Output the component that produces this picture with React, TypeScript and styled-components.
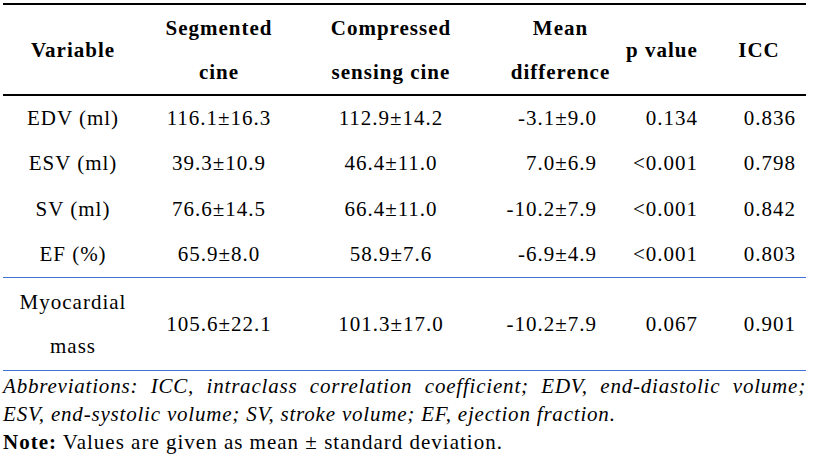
import React from "react";
import styled, { createGlobalStyle } from "styled-components";

const Global = createGlobalStyle`
  html, body { margin: 0; padding: 0; background: #fff; color: #000; }
  body { font-family: "Liberation Serif", "Times New Roman", serif; }
`;

const Page = styled.div`
  padding: 3px 7px 0 3px;
  width: 813px;
  box-sizing: border-box;
  font-family: "Liberation Serif", "Times New Roman", serif;
`;

const Table = styled.table`
  width: 803px;
  border-collapse: collapse;
  table-layout: fixed;
  font-family: "Liberation Serif", "Times New Roman", serif;
  font-size: 21px;
`;

const HeadRow = styled.tr`
  border-top: 2px solid #000;
  border-bottom: 2px solid #000;
  height: 91px;
`;

const Th = styled.th<{ $pl?: number }>`
  font-family: "Liberation Serif", "Times New Roman", serif;
  font-size: 21px;
  letter-spacing: 1px;
  font-weight: bold;
  text-align: center;
  line-height: 44px;
  padding: 0 0 0 ${(p) => p.$pl ?? 0}px;
  vertical-align: middle;
`;

const Row = styled.tr<{ $tall?: boolean; $rule?: boolean }>`
  height: ${(p) => (p.$tall ? "93px" : "45.5px")};
  border-bottom: ${(p) => (p.$rule ? "1px solid #3f74d6" : "none")};
`;

const Td = styled.td<{ $align?: "center" | "right"; $pr?: number }>`
  font-family: "Liberation Serif", "Times New Roman", serif;
  font-size: 21px;
  letter-spacing: 1px;
  text-align: ${(p) => p.$align ?? "center"};
  padding: 0 ${(p) => p.$pr ?? 0}px 0 0;
  line-height: 44px;
  vertical-align: middle;
  white-space: nowrap;
`;

const Footnote = styled.div`
  font-family: "Liberation Serif", "Times New Roman", serif;
  line-height: 28px;
  padding-top: 1px;
`;

const Abbrev = styled.div`
  font-size: 21px;
  font-style: italic;
  letter-spacing: 0.8px;
`;

const AbbrevLine = styled.div<{ $full?: boolean }>`
  white-space: ${(p) => (p.$full ? "normal" : "nowrap")};
  text-align: ${(p) => (p.$full ? "justify" : "left")};
  text-align-last: ${(p) => (p.$full ? "justify" : "left")};
`;

const Note = styled.p`
  margin: 0;
  font-size: 21px;
  letter-spacing: 1px;
`;

type R = { v: string; a: string; b: string; m: string; p: string; icc: string };

const rows: R[] = [
  { v: "EDV (ml)", a: "116.1±16.3", b: "112.9±14.2", m: "-3.1±9.0", p: "0.134", icc: "0.836" },
  { v: "ESV (ml)", a: "39.3±10.9", b: "46.4±11.0", m: "7.0±6.9", p: "<0.001", icc: "0.798" },
  { v: "SV (ml)", a: "76.6±14.5", b: "66.4±11.0", m: "-10.2±7.9", p: "<0.001", icc: "0.842" },
  { v: "EF (%)", a: "65.9±8.0", b: "58.9±7.6", m: "-6.9±4.9", p: "<0.001", icc: "0.803" },
];

export default function App() {
  return (
    <>
      <Global />
      <Page>
        <Table>
          <colgroup>
            <col style={{ width: 140 }} />
            <col style={{ width: 152 }} />
            <col style={{ width: 192 }} />
            <col style={{ width: 125 }} />
            <col style={{ width: 100 }} />
            <col style={{ width: 94 }} />
          </colgroup>
          <thead>
            <HeadRow>
              <Th>Variable</Th>
              <Th>
                Segmented
                <br />
                cine
              </Th>
              <Th>
                Compressed
                <br />
                sensing cine
              </Th>
              <Th $pl={22}>
                Mean
                <br />
                difference
              </Th>
              <Th>p value</Th>
              <Th>ICC</Th>
            </HeadRow>
          </thead>
          <tbody>
            {rows.map((r, i) => (
              <Row key={i} $rule={i === rows.length - 1}>
                <Td>{r.v}</Td>
                <Td>{r.a}</Td>
                <Td>{r.b}</Td>
                <Td $align="right" $pr={15}>{r.m}</Td>
                <Td $align="right" $pr={14}>{r.p}</Td>
                <Td $align="right" $pr={10}>{r.icc}</Td>
              </Row>
            ))}
            <Row $tall $rule>
              <Td>
                Myocardial
                <br />
                mass
              </Td>
              <Td>105.6±22.1</Td>
              <Td>101.3±17.0</Td>
              <Td $align="right" $pr={15}>-10.2±7.9</Td>
              <Td $align="right" $pr={14}>0.067</Td>
              <Td $align="right" $pr={10}>0.901</Td>
            </Row>
          </tbody>
        </Table>
        <Footnote>
          <Abbrev>
            <AbbrevLine $full>
              Abbreviations: ICC, intraclass correlation coefficient; EDV, end-diastolic volume;
            </AbbrevLine>
            <AbbrevLine>ESV, end-systolic volume; SV, stroke volume; EF, ejection fraction.</AbbrevLine>
          </Abbrev>
          <Note>
            <b>Note:</b> Values are given as mean ± standard deviation.
          </Note>
        </Footnote>
      </Page>
    </>
  );
}
